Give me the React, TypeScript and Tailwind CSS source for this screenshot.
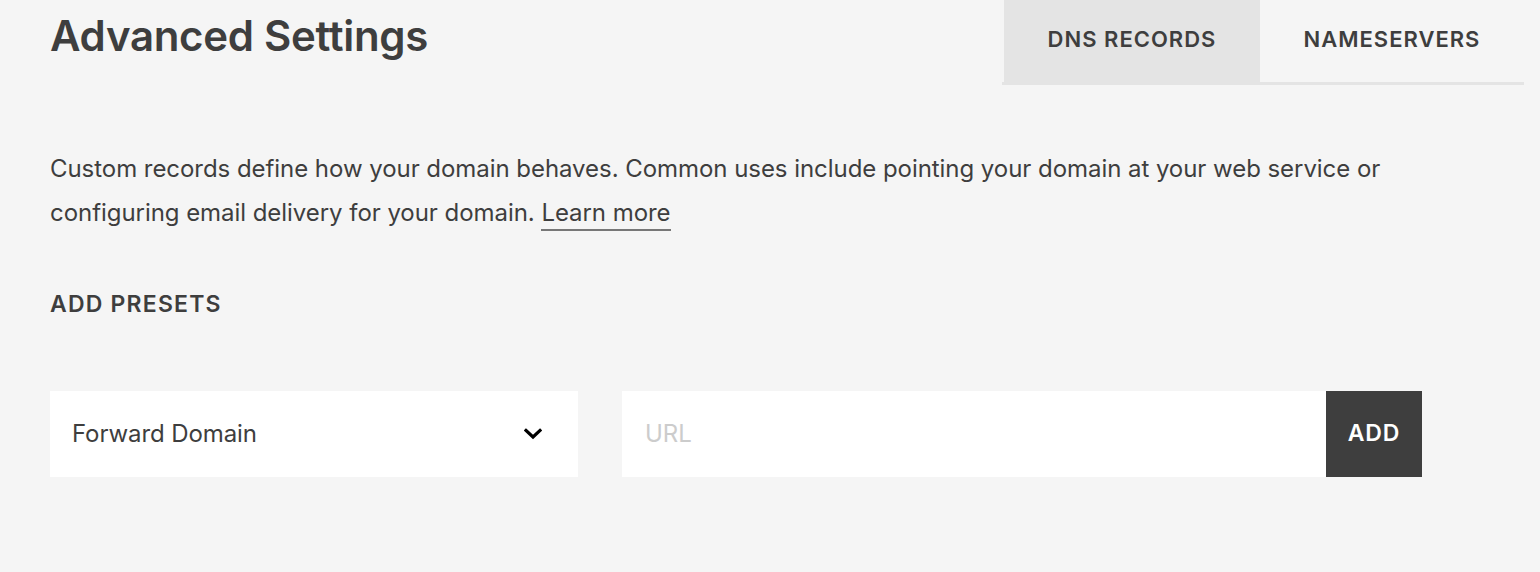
import React from "react";

export default function App() {
  return (
    <div
      className="w-[1540px] h-[572px] overflow-hidden bg-[#f5f5f5] text-[#3e3e3e]"
      style={{ fontFamily: "Inter, 'Liberation Sans', sans-serif" }}
    >
      <div className="flex justify-between pl-[50px] pr-[16px]">
        <h1 className="pt-[12px] text-[42px] leading-[48px] font-semibold tracking-[-0.3px] text-[#3e3e3e]">
          Advanced Settings
        </h1>
        <div className="flex border-b-[3px] border-[#e4e4e4] pl-[2px]">
          <div className="flex h-[82px] w-[256px] items-start justify-center bg-[#e4e4e4] pt-[23px] text-[22px] font-semibold tracking-[1px] text-[#3e3e3e]">
            DNS RECORDS
          </div>
          <div className="flex h-[82px] w-[264px] items-start justify-center pt-[23px] text-[22px] font-semibold tracking-[1px] text-[#3e3e3e]">
            NAMESERVERS
          </div>
        </div>
      </div>

      <div className="pl-[50px] pr-[100px]">
        <p className="mt-[62px] w-[1380px] text-[24px] leading-[44px] tracking-[-0.05px] text-[#3e3e3e]">
          Custom records define how your domain behaves. Common uses include pointing your domain at your web service or configuring email delivery for your domain.{" "}
          <a className="border-b-2 border-[#777] pb-[2px]">Learn more</a>
        </p>

        <div className="mt-[52px] text-[23px] font-semibold tracking-[1.2px] text-[#3e3e3e]">
          ADD PRESETS
        </div>

        <div className="mt-[69px] flex gap-[44px]">
          <div className="flex h-[86px] w-[528px] items-center justify-between bg-white pl-[22px] pr-[36px]">
            <span className="text-[24px] tracking-[-0.1px] text-[#3e3e3e]">Forward Domain</span>
            <svg width="18" height="12" viewBox="0 0 18 12" fill="none">
              <path d="M2 2.5 L9 9 L16 2.5" stroke="#000" strokeWidth="3.2" strokeLinecap="square" />
            </svg>
          </div>
          <div className="flex h-[86px]">
            <div className="flex w-[704px] items-center bg-white pl-[23px] text-[24px] text-[#cccccc]">
              URL
            </div>
            <button className="flex h-[86px] w-[96px] items-center justify-center bg-[#3e3e3e] text-[23px] font-semibold tracking-[0.8px] text-white">
              ADD
            </button>
          </div>
        </div>
      </div>
    </div>
  );
}
